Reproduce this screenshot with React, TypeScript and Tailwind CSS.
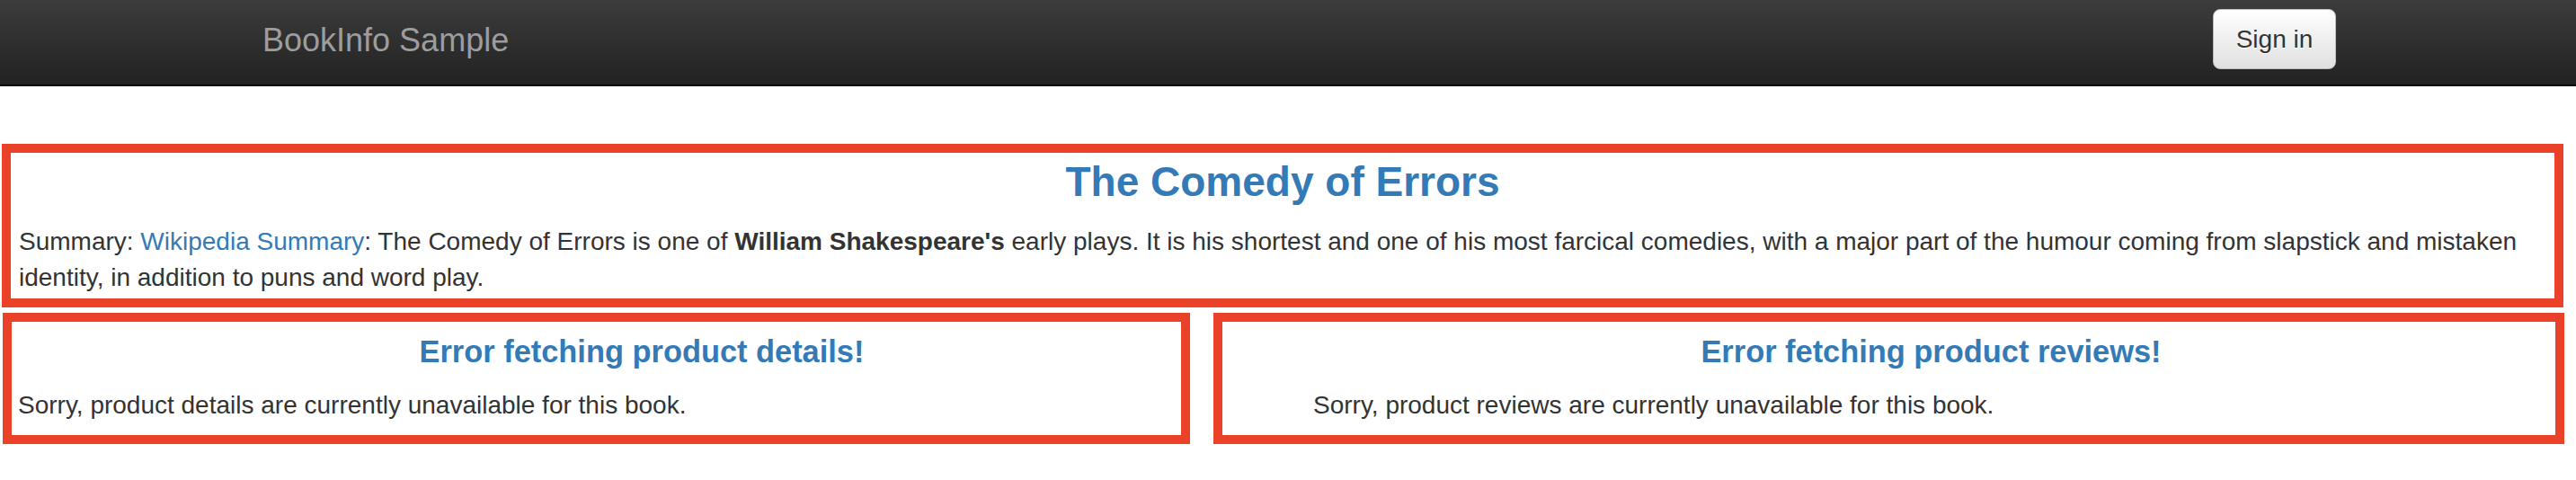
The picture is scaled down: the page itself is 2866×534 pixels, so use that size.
import React from "react";

export default function App() {
  return (
    <div
      className="w-[2866px] min-h-[534px] bg-white text-[#333333]"
      style={{ fontFamily: '"Liberation Sans", Arial, Helvetica, sans-serif' }}
    >
      {/* Navbar */}
      <div className="flex h-[96px] border-b-2 border-[#080808] bg-gradient-to-b from-[#3c3c3c] to-[#222222]">
        <div className="ml-[292px] mt-[27px] self-start text-[36px] leading-[36px] text-[#9d9d9d]">
          BookInfo Sample
        </div>
        <button className="ml-auto mr-[267px] mt-[10px] flex h-[67px] w-[137px] items-center justify-center self-start rounded-[8px] border border-[#bdbdbd] bg-gradient-to-b from-[#ffffff] to-[#e0e0e0] text-[28px] leading-[28px] text-[#333333] [text-shadow:0_1px_0_#fff]">
          Sign in
        </button>
      </div>

      {/* Product summary */}
      <div className="ml-[2px] mr-[14px] mt-[64px] border-[10px] border-[#ea4229] pb-[3px] pl-[9px] pr-[9px] pt-[6px]">
        <h3 className="text-center text-[46px] font-bold leading-[53px] text-[#337ab7]">
          The Comedy of Errors
        </h3>
        <p className="mt-[20px] text-[28px] leading-[40px]">
          Summary: <span className="text-[#337ab7]">Wikipedia Summary</span>: The Comedy of Errors is
          one of <b className="font-bold">William Shakespeare's</b> early plays. It is his shortest and
          one of his most farcical comedies, with a major part of the humour coming from slapstick and
          mistaken identity, in addition to puns and word play.
        </p>
      </div>

      {/* Details & reviews */}
      <div className="mt-[6px] flex gap-[26px] pl-[3px] pr-[13px]">
        <div className="w-[1321px] shrink-0 border-[10px] border-[#ea4229] pb-[13px] pl-[7px] pt-[14px]">
          <h4 className="pl-[94px] text-center text-[34.4px] font-bold leading-[38px] text-[#337ab7]">
            Error fetching product details!
          </h4>
          <p className="mt-[21px] text-[28px] leading-[40px]">
            Sorry, product details are currently unavailable for this book.
          </p>
        </div>
        <div className="flex-1 border-[10px] border-[#ea4229] pb-[13px] pl-[101px] pt-[14px]">
          <h4 className="-ml-[101px] pl-[94px] text-center text-[34.4px] font-bold leading-[38px] text-[#337ab7]">
            Error fetching product reviews!
          </h4>
          <p className="mt-[21px] text-[28px] leading-[40px]">
            Sorry, product reviews are currently unavailable for this book.
          </p>
        </div>
      </div>
    </div>
  );
}
